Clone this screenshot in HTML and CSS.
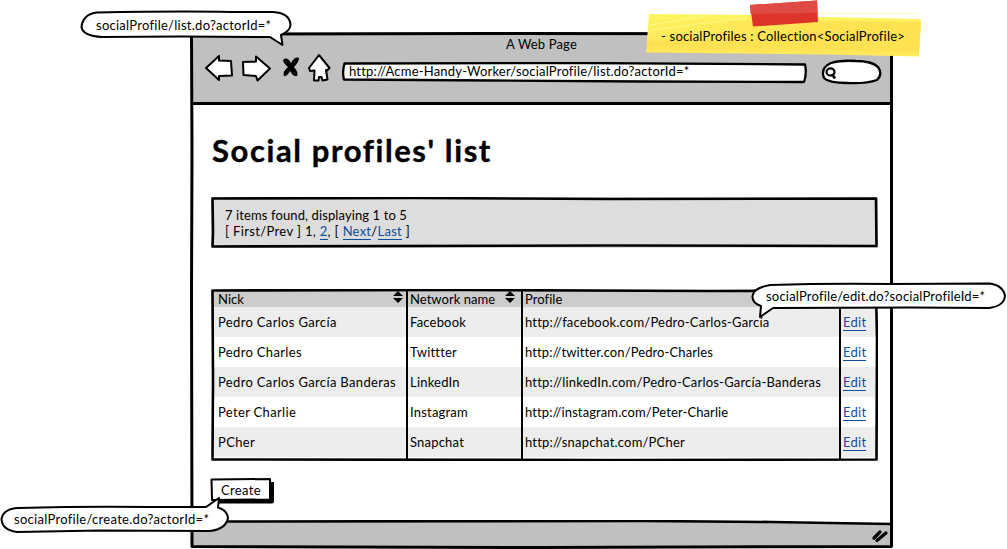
FILE: index.html
```html
<!DOCTYPE html>
<html lang="en">
<head>
<meta charset="utf-8">
<title>Social profiles' list</title>
<link rel="stylesheet" href="styles.css">
</head>
<body>
<main class="window">
  <svg class="frame" width="705" height="518" viewBox="0 0 705 518">
    <path d="M1.500 2 L300 1.500 L701.500 2 L701.500 514.500 L350 515.500 L2 514.500 L1.500 260 L2 120 L1.500 2" stroke-width="3"/>
  </svg>
  <header class="chrome">
    <div class="title">A Web Page</div>
    <div class="toolbar">
      <svg class="nav" width="126" height="32" viewBox="0 0 126 32">
        <g fill="#fff" stroke="#000" stroke-width="2" stroke-linejoin="round">
          <path d="M1 16 L14 4 L14 8.500 L26 9 L27 23.500 L14 24 L14 28 Z"/>
          <path d="M38 10 L51 9.500 L51 4.500 L65 16.500 L52.500 28.500 L51 24 L38.500 23 Z"/>
          <path d="M114 3 L124.500 16 L122 18.500 L121 18 L122.500 27.500 L117.500 28.500 L116.500 25 L114 25 L113.500 28.500 L109 28.500 L109.500 18.500 L105 19 L104 16 Z"/>
        </g>
        <path d="M78 8 Q82 4 86 11 Q90 4 94 6 Q94 10 89 15 Q94 21 92 24 Q88 25 85 19 Q82 25 79 24 Q77 20 83 15 Q78 11 78 8Z"/>
      </svg>
      <div class="address">
        <svg class="frame" width="466" height="22" viewBox="0 0 466 22"><path d="M2.500 1.500 L240 1 L463 2.500 Q465 11 462 20 L300 19.500 L150 18.500 L2 17.500 Q0 10 2.500 1.500Z" fill="#fff" stroke-width="2.300"/></svg>
        <span>http://Acme-Handy-Worker/socialProfile/list.do?actorId=*</span>
      </div>
      <svg class="search" width="62" height="26" viewBox="0 0 62 26">
        <path d="M10 4 Q20 1 35 2 Q51 2 57 8 Q62 15 56 21 Q45 25 26 24 Q8 24 3 19 Q-1 9 10 4Z" fill="#fff" stroke="#000" stroke-width="2.300"/>
        <ellipse cx="9.500" cy="13" rx="4" ry="3.600" fill="#fff" stroke="#000" stroke-width="2.200"/>
        <path d="M11 15 L14 19.500" stroke="#000" stroke-width="2.800"/>
      </svg>
    </div>
  </header>
  <section class="content">
    <h1>Social profiles' list</h1>
    <div class="pager">
      <svg class="frame" width="667" height="51" viewBox="0 0 667 51"><path d="M1.500 1.500 L200 1 L400 2 L665 1.500 L665.500 49 L400 48.500 L1.500 49.500 L2 35 Z" stroke-width="2.600"/></svg>
      <div>7 items found, displaying 1 to 5</div>
      <div class="pages">[ First/Prev ] 1, <a>2</a>, [ <a>Next</a>/<a>Last</a> ]</div>
    </div>
    <div class="table">
      <div class="row head"><div>Nick<svg class="sort" width="10" height="12" viewBox="0 0 10 12"><path d="M5 0L10 5H0ZM0 7H10L5 12Z"/></svg></div><div>Network name<svg class="sort" width="10" height="12" viewBox="0 0 10 12"><path d="M5 0L10 5H0ZM0 7H10L5 12Z"/></svg></div><div>Profile</div><div></div></div>
      <div class="row"><div>Pedro Carlos García</div><div>Facebook</div><div>http://facebook.com/Pedro-Carlos-García</div><div><a>Edit</a></div></div>
      <div class="row"><div>Pedro Charles</div><div>Twittter</div><div class="tight">http://twitter.con/Pedro-Charles</div><div><a>Edit</a></div></div>
      <div class="row"><div>Pedro Carlos García Banderas</div><div>LinkedIn</div><div>http://linkedIn.com/Pedro-Carlos-García-Banderas</div><div><a>Edit</a></div></div>
      <div class="row"><div>Peter Charlie</div><div>Instagram</div><div class="tight">http://instagram.com/Peter-Charlie</div><div><a>Edit</a></div></div>
      <div class="row last"><div>PCher</div><div>Snapchat</div><div>http://snapchat.com/PCher</div><div><a>Edit</a></div></div>
      <svg class="frame" width="667" height="172" viewBox="0 0 667 172"><path d="M1.500 1.500 L250 1 L500 2 L665 1.500 L666 50 L665.500 170.500 L400 171 L1.500 170.500 L2 90 Z" stroke-width="2.600"/></svg>
    </div>
    <div class="create">
      <svg class="frame" width="64" height="26" viewBox="0 0 64 26"><path d="M4 23.500H62V4" stroke-width="4"/><path d="M1.500 1.500 L60 1 L60 21.500 L2 22 Z" stroke-width="2"/></svg>
      Create
    </div>
  </section>
  <footer class="status">
    <svg width="699" height="27" viewBox="0 0 699 27">
      <path d="M0 1.500 L450 1 L580 2 L699 4 V26 H0Z" fill="#c0c0c0"/>
      <path d="M0 1.500 L450 1 L580 2 L699 4" fill="none" stroke="#000" stroke-width="2.600"/>
      <path d="M682 18 L688 12 M685 20.500 L694 13" stroke="#000" stroke-width="3.200" stroke-linecap="round"/>
    </svg>
  </footer>
</main>

<div class="callout list">
  <svg class="frame" width="214" height="40" viewBox="0 0 214 40"><path d="M17 2.500 Q100 1 150 2 L193 2 Q210 3 210.500 15 Q210 21 201 25 L202.500 35 L190 27 L100 26.500 L22 27 Q3 26 1.500 17 Q3 4 17 2.500Z" fill="#fff" stroke-width="2"/></svg>
  <span>socialProfile/list.do?actorId=*</span>
</div>
<div class="callout edit">
  <svg class="frame" width="256" height="40" viewBox="0 0 256 40"><path d="M19 3 Q80 1 140 2 L238 1.500 Q252 3 254 14 Q253 24 238 26 L160 25.500 L22 26 L9 35 L10 24 Q1 21 1.500 14 Q2 6 19 3Z" fill="#fff" stroke-width="2"/></svg>
  <span>socialProfile/edit.do?socialProfileId=*</span>
</div>
<div class="callout make">
  <svg class="frame" width="230" height="38" viewBox="0 0 230 38"><path d="M18 11 Q90 9 150 10 L206 10 L219 1 L218 10.500 Q227 13 228 21 Q226 32 210 34 L100 33.500 L17 35 Q2 33 1.500 22 Q3 12 18 11Z" fill="#fff" stroke-width="2"/></svg>
  <span>socialProfile/create.do?actorId=*</span>
</div>

<div class="note">
  <svg class="frame" width="276" height="58" viewBox="0 0 276 58">
    <defs>
      <linearGradient id="paper" x1="0" y1="0" x2="0" y2="1"><stop offset="0" stop-color="#fff45d"/><stop offset=".55" stop-color="#ffec5f"/><stop offset=".68" stop-color="#ffdf50"/><stop offset="1" stop-color="#ffeb5c"/></linearGradient>
      <linearGradient id="side"><stop offset="0" stop-color="#ffe252" stop-opacity="0"/><stop offset=".6" stop-color="#ffe252"/></linearGradient>
    </defs>
    <path d="M3 14 L110 15 L180 17 L275 19 L273 56.500 L180 54.500 L0 52.500 Z" fill="url(#paper)"/>
    <path d="M4 20 L275 22 L273 52 L2 48Z" fill="url(#side)"/>
    <path d="M170 13.500 L272 13.500" stroke="#fff8c4" stroke-width="1"/>
    <path d="M4 25 L60 16 M5 30 L100 18" stroke="#fff987" stroke-width="1"/>
    <path d="M104 5 L171 .5 L172 22 L107 26.500 Z" fill="#dd332a"/>
    <path d="M104 5 L171 .5 L171.500 13 L104.500 14 Z" fill="#df4b44"/>
  </svg>
  <span>- socialProfiles : Collection&lt;SocialProfile&gt;</span>
</div>
</body>
</html>
```

FILE: styles.css
```css
* { box-sizing: border-box; }
body {
  margin: 0;
  position: relative;
  width: 1007px;
  height: 549px;
  overflow: hidden;
  background: #fff;
  color: #000;
  font: 13px/16px Lato, "Liberation Sans", sans-serif;
  letter-spacing: .2px;
  white-space: nowrap;
}
svg { display: block; flex: none; }
a { color: #0d4e9b; border-bottom: 1px solid #0d4e9b; display: inline-block; line-height: 15px; letter-spacing: .25px; }
.frame { position: absolute; left: 0; top: 0; fill: none; stroke: #000; pointer-events: none; stroke-linejoin: round; }
.note .frame { stroke: none; }
.window {
  position: relative;
  margin-left: 190px;
  margin-top: 32px;
  width: 703px;
  height: 517px;
  float: left;
  padding: 2px;
  display: flex;
  flex-direction: column;
}
.chrome { height: 71px; background: #c0c0c0; border-bottom: 3px solid #000; padding-top: 2px; }
.title { text-align: center; letter-spacing: .15px; }
.toolbar { display: flex; align-items: flex-start; padding-left: 13px; }
.nav { margin-top: 0; }
.address { position: relative; width: 466px; height: 22px; margin: 10px 13px 0 11px; padding: 1px 0 0 7px; }
.address span, .callout span, .note span { position: relative; }
.search { margin-top: 7px; }
.content { padding: 25px 0 0 19px; height: 415px; }
h1 { margin: 0; padding-left: 1px; font-size: 31px; line-height: 40px; letter-spacing: 1.6px; font-weight: 700; -webkit-text-stroke: .4px; }
.pager { position: relative; width: 667px; height: 51px; margin-top: 27px; padding: 10px 14px; background: #ddd; letter-spacing: .11px; }
.pages { letter-spacing: .36px; }
.table { position: relative; width: 667px; height: 172px; margin-top: 41px; padding: 2px 1px 0; }
.row { display: grid; grid-template-columns: 194px 115px 318px 38px; height: 30px; }
.row > div { border-left: 2px solid #000; padding: 7px 0 0 2px; }
.row > div:first-child { border: 0; padding-left: 6px; letter-spacing: .34px; }
.row > .tight { letter-spacing: .1px; }
.row:nth-of-type(even) { background: #ededed; }
.row.head { height: 16px; background: #ccc; }
.row.head > div { display: flex; justify-content: space-between; padding-top: 0; padding-right: 6px; letter-spacing: .05px; }
.row.head > div:first-child { padding-right: 3px; }
.row.last { height: 32px; padding-bottom: 0; background: linear-gradient(#ededed 30px, #fff 30px) !important; }
.create { position: relative; width: 64px; height: 26px; margin-top: 17px; margin-left: -1px; padding: 4px 0 0 11px; letter-spacing: .36px; }
.callout { position: absolute; }
.list { left: 80px; top: 10px; padding: 7px 0 0 16px; letter-spacing: .26px; }
.edit { left: 751px; top: 282px; padding: 6px 0 0 15px; }
.make { left: 0; top: 497px; padding: 14px 0 0 14px; letter-spacing: .29px; }
.note { position: absolute; left: 646px; top: 0; padding: 28px 0 0 15px; }
```
